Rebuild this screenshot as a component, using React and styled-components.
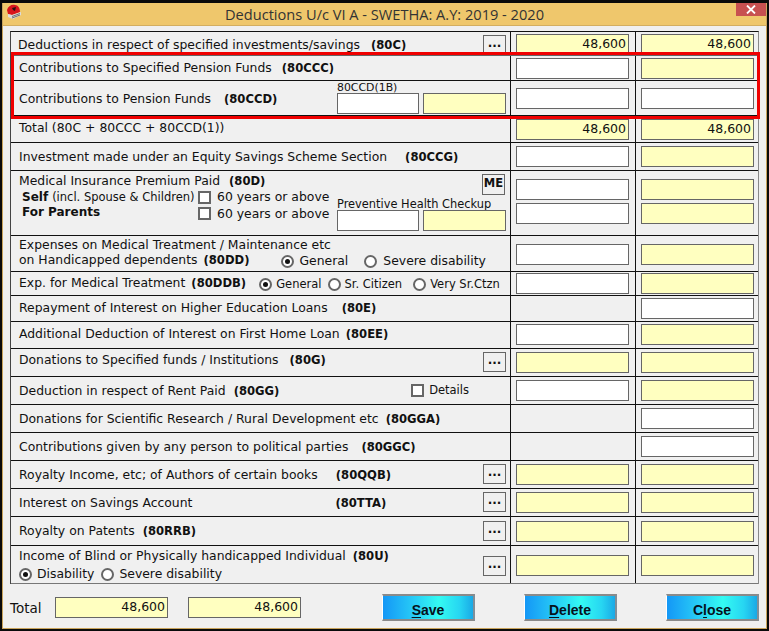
import React from 'react';
import styled, { createGlobalStyle } from 'styled-components';

const GlobalStyle = createGlobalStyle`
  html, body {
    margin: 0;
    padding: 0;
    background: #000;
  }
  * {
    box-sizing: border-box;
  }
`;

const Frame = styled.div`
  width: 769px;
  height: 631px;
  border-style: solid;
  border-color: #0a0a0a;
  border-width: 3px 2px 2px 2px;
  font-family: "DejaVu Sans", Verdana, sans-serif;
  font-size: 12.4px;
  color: #111;
`;

const Win = styled.div`
  position: relative;
  height: 100%;
  background: #f0f0f0;
  border: 1px solid #c9a45c;
  border-top: none;
`;

const TitleBar = styled.div`
  display: grid;
  grid-template-columns: 30px 1fr 30px;
  height: 23px;
  background: #efc76c;
  border-bottom: 1px solid #d3ae60;
`;

const AppIcon = styled.svg`
  width: 16px;
  height: 16px;
  margin: 1px 0 0 3px;
`;

const TitleText = styled.div`
  font-family: "Open Sans", "Noto Sans", sans-serif;
  font-size: 14.6px;
  line-height: 22px;
  text-align: center;
  color: #333;
`;

const CloseBtn = styled.div`
  height: 13px;
  background: #c75050;
  color: #fff;
  display: flex;
  align-items: center;
  justify-content: center;
`;

const Body = styled.div`
  padding: 5px 0 0 7px;
`;

const Table = styled.div`
  width: 749px;
  border-top: 1px solid #111;
  border-left: 1px solid #444;
  border-right: 1px solid #888;
`;

const Row = styled.div`
  display: grid;
  grid-template-columns: 500px 125px 122px;
  height: ${p => p.$h}px;
  border-bottom: 1px solid ${p => p.$line || '#111'};
`;

const MainCell = styled.div`
  display: flex;
  justify-content: space-between;
  align-items: flex-start;
  padding: ${p => p.$top || 0}px 4px 0 8px;
  border-right: 1px solid #111;
  min-width: 0;
`;

const AmountCell = styled.div`
  padding: ${p => p.$top || 0}px 0 0 5px;
  border-right: ${p => (p.$last ? 'none' : '1px solid #111')};
  display: flex;
  flex-direction: column;
  gap: 3px;
`;

const Field = styled.div`
  width: ${p => p.$w || 113}px;
  height: 21px;
  flex: none;
  border: 1px solid #666;
  background: ${p => (p.$yellow ? '#ffffc0' : '#fff')};
  text-align: right;
  padding-right: 2px;
  font-size: 12.5px;
  line-height: 18px;
  color: #111;
`;

const Line = styled.div`
  display: flex;
  align-items: center;
  line-height: 16px;
  white-space: nowrap;
  margin-left: ${p => p.$indent || 0}px;
  margin-top: ${p => p.$top || 0}px;
  margin-right: ${p => p.$right || 0}px;
`;

const Code = styled.b`
  margin-left: ${p => p.$gap ?? 8}px;
  font-size: 11.6px;
`;

const Strong = styled.b`
  font-size: 12px;
`;

const DotsBtn = styled.div`
  width: 23px;
  height: 20px;
  flex: none;
  margin-top: ${p => p.$top || 0}px;
  border: 1px solid #666;
  font-weight: bold;
  font-size: 12px;
  line-height: 15px;
  text-align: center;
  color: #111;
`;

const MeBtn = styled(DotsBtn)`
  align-self: flex-end;
  margin-right: 1px;
  height: 21px;
  line-height: 16px;
  font-size: 11.5px;
`;

const SubField = styled.div`
  display: flex;
  flex-direction: column;
`;

const SmallCaption = styled.div`
  font-size: ${p => p.$size || 11}px;
  line-height: ${p => p.$lh || 13}px;
  margin-top: ${p => p.$top || 0}px;
  margin-bottom: -2px;
  white-space: nowrap;
`;

const FieldPair = styled.div`
  display: flex;
  gap: 4px;
`;

const Stack = styled.div`
  display: flex;
  flex-direction: column;
`;

const MedicalRow = styled.div`
  display: grid;
  grid-template-columns: 179px auto;
  align-items: center;
  height: ${p => p.$h}px;
`;

const PlainText = styled.span`
  margin-left: ${p => p.$gap || 0}px;
  font-size: ${p => p.$size || 12.4}px;
  white-space: nowrap;
`;

const Check = styled.span`
  display: inline-block;
  width: 13px;
  height: 13px;
  flex: none;
  border: 2px solid #666;
  background: #fff;
  margin-left: ${p => p.$gap || 0}px;
`;

const Radio = styled.span`
  display: inline-flex;
  align-items: center;
  justify-content: center;
  width: 13px;
  height: 13px;
  flex: none;
  border: 2px solid #666;
  border-radius: 50%;
  background: #fff;
  margin-left: ${p => p.$gap || 0}px;
  &::after {
    content: '';
    width: 5px;
    height: 5px;
    border-radius: 50%;
    background: ${p => (p.$on ? '#111' : 'transparent')};
  }
`;

const OptionGroup = styled.div`
  display: flex;
  align-items: center;
  margin-top: ${p => p.$top || 0}px;
  margin-left: ${p => p.$left || 0}px;
  line-height: 16px;
`;

const Footer = styled.div`
  display: flex;
  align-items: center;
  width: 749px;
  height: 27px;
  margin-top: 10px;
`;

const TotalLabel = styled.div`
  width: 45px;
  font-size: 13.5px;
`;

const FooterGap = styled.div`
  width: ${p => p.$w}px;
`;

const ActionBtn = styled.div`
  width: 93px;
  height: 27px;
  margin-left: ${p => p.$gap || 0}px;
  border-style: solid;
  border-width: 2px 2px 2px 1px;
  border-color: #8a8a8a #7f8f99 #8a8a8a #fff;
  background: linear-gradient(90deg, #1497f6 0%, #28cdf6 35%, #34fbf2 62%, #27d6f2 85%, #1aa9e6 100%);
  font-family: "Liberation Sans", Arial, sans-serif;
  font-weight: bold;
  font-size: 14px;
  line-height: 28px;
  text-align: center;
  color: #06121c;
  u {
    text-underline-offset: 2px;
  }
`;

const Highlight = styled.div`
  position: absolute;
  left: 8px;
  top: 49px;
  width: 749px;
  height: 67px;
  border: 3px solid #f00000;
  pointer-events: none;
`;

function Logo() {
  return (
    <AppIcon viewBox="0 0 16 16">
      <path d="M1 6 C2 2 6 0 9 1 C12 1 14 4 14 8 L6 11 L2 10 Z" fill="#d8141c" />
      <path d="M6 4 L10 3 L9 7 L7 6 Z" fill="#2a1010" />
      <path d="M2 10 L6 11 L15 8 L15 11 L7 15 L2 13 Z" fill="#dcdcdc" />
      <path d="M6 12.5 L14 9.5 M6 14 L14 11" stroke="#555" strokeWidth="0.8" />
    </AppIcon>
  );
}

function Deduction({ h, line, top, fieldTop, mid, right, midValue, rightValue, children }) {
  return (
    <Row $h={h} $line={line}>
      <MainCell $top={top}>{children}</MainCell>
      <AmountCell $top={fieldTop}>
        {mid && <Field $yellow={mid === 'y'}>{midValue}</Field>}
      </AmountCell>
      <AmountCell $top={fieldTop} $last>
        <Field $yellow={right === 'y'}>{rightValue}</Field>
      </AmountCell>
    </Row>
  );
}

function Option({ on, gap, size, textGap = 6, children }) {
  return (
    <>
      <Radio $on={on} $gap={gap} />
      <PlainText $gap={textGap} $size={size}>{children}</PlainText>
    </>
  );
}

export default function App() {
  return (
    <Frame>
      <GlobalStyle />
      <Win>
        <TitleBar>
          <Logo />
          <TitleText>Deductions U/c VI A - SWETHA: A.Y: 2019 - 2020</TitleText>
          <CloseBtn>
            <svg width="10" height="9" viewBox="0 0 10 9">
              <path d="M1 0.5 L9 8.5 M9 0.5 L1 8.5" stroke="#fff" strokeWidth="1.8" />
            </svg>
          </CloseBtn>
        </TitleBar>
        <Body>
          <Table>
            <Deduction h={24} top={5} fieldTop={2} mid="y" right="y" midValue="48,600" rightValue="48,600" line="#666">
              <Line $indent={-1}>Deductions in respect of specified investments/savings<Code $gap={11}>(80C)</Code></Line>
              <DotsBtn $top={-2}>...</DotsBtn>
            </Deduction>
            <Deduction h={25} top={4} fieldTop={2} mid="w" right="y">
              <Line>Contributions to Specified Pension Funds<Code $gap={10}>(80CCC)</Code></Line>
            </Deduction>
            <Deduction h={35} top={0} fieldTop={7} mid="w" right="w">
              <Line $top={10}>Contributions to Pension Funds<Code $gap={13}>(80CCD)</Code></Line>
              <SubField>
                <SmallCaption $size={10.9} $lh={14}>80CCD(1B)</SmallCaption>
                <FieldPair>
                  <Field $w={82} />
                  <Field $w={83} $yellow />
                </FieldPair>
              </SubField>
            </Deduction>
            <Deduction h={27} top={4} fieldTop={3} mid="y" right="y" midValue="48,600" rightValue="48,600">
              <Line>Total (80C + 80CCC + 80CCD(1))</Line>
            </Deduction>
            <Deduction h={28} top={6} fieldTop={3} mid="w" right="y">
              <Line>Investment made under an Equity Savings Scheme Section<Code $gap={18}>(80CCG)</Code></Line>
            </Deduction>

            <Row $h={65}>
              <MainCell $top={2}>
                <Stack>
                  <Line>Medical Insurance Premium Paid<Code $gap={9}>(80D)</Code></Line>
                  <MedicalRow $h={13}>
                    <Line $indent={3}>
                      <Strong>Self</Strong>
                      <PlainText $gap={4} $size={11.5}>(incl. Spouse &amp; Children)</PlainText>
                    </Line>
                    <Line><Check /><PlainText $gap={6}>60 years or above</PlainText></Line>
                  </MedicalRow>
                  <MedicalRow $h={23}>
                    <Line $indent={3} $top={-3}><Strong>For Parents</Strong></Line>
                    <Line><Check /><PlainText $gap={6}>60 years or above</PlainText></Line>
                  </MedicalRow>
                </Stack>
                <SubField>
                  <MeBtn $top={1}>ME</MeBtn>
                  <SmallCaption $size={11.4} $lh={15} $top={2}>Preventive Health Checkup</SmallCaption>
                  <FieldPair>
                    <Field $w={82} />
                    <Field $w={83} $yellow />
                  </FieldPair>
                </SubField>
              </MainCell>
              <AmountCell $top={8}>
                <Field />
                <Field />
              </AmountCell>
              <AmountCell $top={8} $last>
                <Field $yellow />
                <Field $yellow />
              </AmountCell>
            </Row>

            <Deduction h={36} top={1} fieldTop={8} mid="w" right="y">
              <Stack>
                <Line>Expenses on Medical Treatment / Maintenance etc</Line>
                <Line $top={-2}>
                  on Handicapped dependents<Code $gap={6}>(80DD)</Code>
                  <OptionGroup $left={32} $top={2}>
                    <Option on textGap={5}>General</Option>
                    <Option gap={16}>Severe disability</Option>
                  </OptionGroup>
                </Line>
              </Stack>
            </Deduction>
            <Deduction h={24} top={2} fieldTop={1} mid="w" right="y">
              <Line>
                Exp. for Medical Treatment<Code $gap={6}>(80DDB)</Code>
                <OptionGroup $left={13} $top={2}>
                  <Option on size={11.5} textGap={4}>General</Option>
                  <Option gap={6} size={11.5} textGap={4}>Sr. Citizen</Option>
                  <Option gap={11} size={11.5} textGap={4}>Very Sr.Ctzn</Option>
                </OptionGroup>
              </Line>
            </Deduction>
            <Deduction h={26} top={4} fieldTop={2} right="w">
              <Line>Repayment of Interest on Higher Education Loans<Code $gap={14}>(80E)</Code></Line>
            </Deduction>
            <Deduction h={27} top={4} fieldTop={2} mid="w" right="y">
              <Line>Additional Deduction of Interest on First Home Loan<Code $gap={6}>(80EE)</Code></Line>
            </Deduction>
            <Deduction h={28} top={3} fieldTop={3} mid="y" right="y">
              <Line>Donations to Specified funds / Institutions<Code $gap={11}>(80G)</Code></Line>
              <DotsBtn>...</DotsBtn>
            </Deduction>
            <Deduction h={28} top={6} fieldTop={3} mid="w" right="y">
              <Line>Deduction in respect of Rent Paid<Code>(80GG)</Code></Line>
              <Line $right={37} $top={-1}>
                <Check />
                <PlainText $gap={5} $size={11.5}>Details</PlainText>
              </Line>
            </Deduction>
            <Deduction h={28} top={6} fieldTop={3} right="w">
              <Line>Donations for Scientific Research / Rural Development etc<Code $gap={7}>(80GGA)</Code></Line>
            </Deduction>
            <Deduction h={28} top={6} fieldTop={3} right="w">
              <Line>Contributions given by any person to political parties<Code $gap={13}>(80GGC)</Code></Line>
            </Deduction>
            <Deduction h={28} top={6} fieldTop={3} mid="y" right="y">
              <Line>Royalty Income, etc; of Authors of certain books<Code $gap={18}>(80QQB)</Code></Line>
              <DotsBtn $top={-3}>...</DotsBtn>
            </Deduction>
            <Deduction h={28} top={6} fieldTop={3} mid="y" right="y">
              <Line>Interest on Savings Account<Code $gap={143}>(80TTA)</Code></Line>
              <DotsBtn $top={-3}>...</DotsBtn>
            </Deduction>
            <Deduction h={29} top={6} fieldTop={4} mid="y" right="y">
              <Line>Royalty on Patents<Code $gap={8}>(80RRB)</Code></Line>
              <DotsBtn $top={-2}>...</DotsBtn>
            </Deduction>
            <Deduction h={38} top={2} fieldTop={9} mid="y" right="y" line="#777">
              <Stack>
                <Line>Income of Blind or Physically handicapped Individual<Code $gap={7}>(80U)</Code></Line>
                <OptionGroup $top={2}>
                  <Option on textGap={5}>Disability</Option>
                  <Option gap={7} textGap={5}>Severe disability</Option>
                </OptionGroup>
              </Stack>
              <DotsBtn $top={8}>...</DotsBtn>
            </Deduction>
          </Table>
          <Footer>
            <TotalLabel>Total</TotalLabel>
            <Field $yellow>48,600</Field>
            <FooterGap $w={20} />
            <Field $yellow>48,600</Field>
            <ActionBtn $gap={81}><u>S</u>ave</ActionBtn>
            <ActionBtn $gap={49}><u>D</u>elete</ActionBtn>
            <ActionBtn $gap={49}>C<u>l</u>ose</ActionBtn>
          </Footer>
        </Body>
        <Highlight />
      </Win>
    </Frame>
  );
}
